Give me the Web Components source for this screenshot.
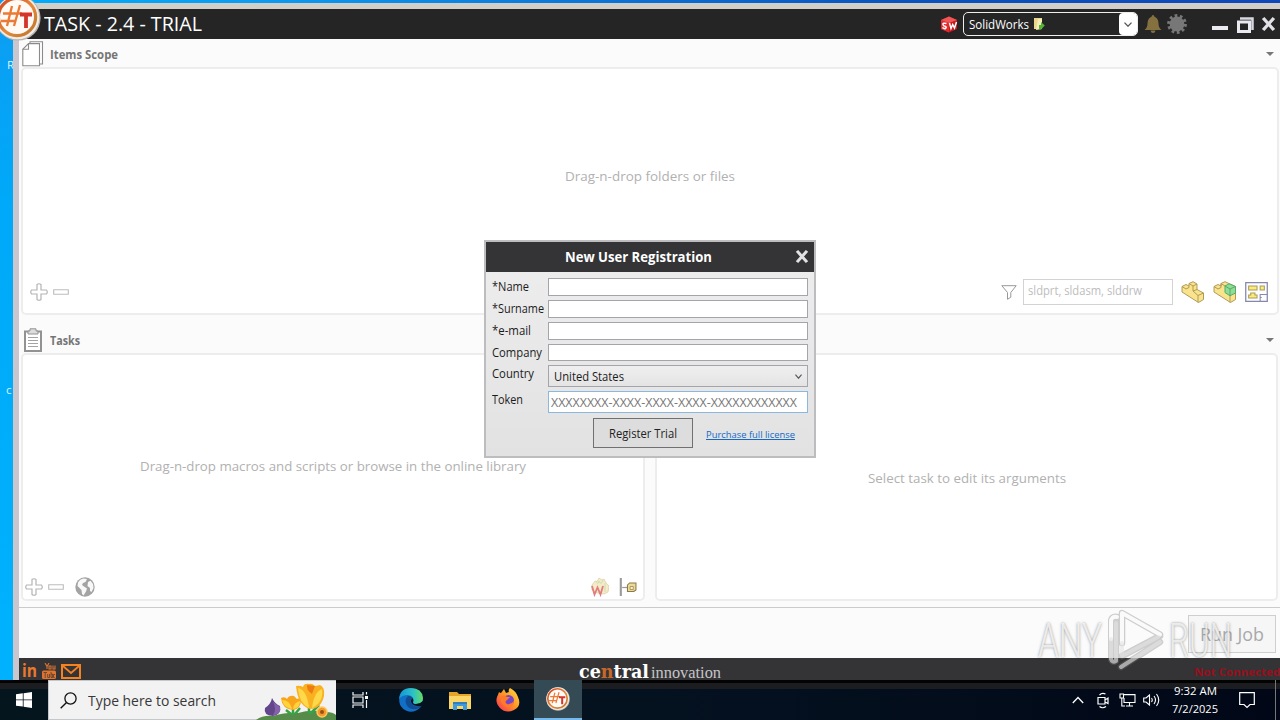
<!DOCTYPE html>
<html lang="en">
<head>
<meta charset="utf-8">
<title>TASK - 2.4 - TRIAL</title>
<style>
html,body{margin:0;width:1280px;height:720px;overflow:hidden;font-family:"Open Sans","Noto Sans",sans-serif;background:#000}
</style>
</head>
<body>
<desktop-screen></desktop-screen>
<script>
const define = (name, html) => {
  const t = document.createElement('template');
  t.innerHTML = html;
  customElements.define(name, class extends HTMLElement {
    constructor() {
      super();
      this.attachShadow({mode: 'open'}).appendChild(t.content.cloneNode(true));
    }
  });
};

/* Single line of text squeezed to a given advance width */
customElements.define('fit-text', class extends HTMLElement {
  constructor() {
    super();
    this.attachShadow({mode: 'open'}).innerHTML = '<style>:host{display:block;flex:none;white-space:nowrap}span{display:inline-block;vertical-align:top;text-decoration:inherit;transform-origin:0 50%}</style><span><slot></slot></span>';
  }
  connectedCallback() {
    const w = +this.getAttribute('w'), s = this.shadowRoot.querySelector('span');
    this.style.width = w + 'px';
    const n = s.offsetWidth;
    if (n) s.style.transform = `scaleX(${w / s.getBoundingClientRect().width})`;
  }
});

const icons = {
logo: ['0 0 46 46', `<defs><linearGradient id="g" x1="0" y1="0" x2="1" y2="1"><stop offset="0" stop-color="#d2421f"/><stop offset=".55" stop-color="#e58a3c"/><stop offset="1" stop-color="#b9742c"/></linearGradient></defs><circle cx="23" cy="23" r="22.6" fill="#b9b4ae"/><circle cx="22.5" cy="22.5" r="21.8" fill="#f1ece6"/><circle cx="22" cy="22" r="18.6" fill="#fffaf5" stroke="url(#g)" stroke-width="3.2"/><path d="M17 11L12 31M25 10L19 31M8 18.500H27M6 26H21" stroke="#ea7a35" stroke-width="2.300" fill="none"/><path d="M25 19.500H37M31 19V33" stroke="#d3342b" stroke-width="3.800"/>`],
copy: ['0 0 22 26', `<g fill="#fff" stroke="#8b8b8b" stroke-width="1.1"><path d="M8 .8H20.500V23H8z"/><path d="M6.500 2.600H17.500V24.800H.8V8.300z"/><path d="M6.500 2.600V8.300H.8" fill="none"/></g>`],
clip: ['0 0 18 24', `<path d="M1 3.500H17V23H1z" fill="#fff" stroke="#929292" stroke-width="2"/><path d="M4 6V3H6V.8H12V3H14V6z" fill="#ddd" stroke="#929292"/><path d="M4 9.500H14M4 12.500H14M4 15.500H14M4 18.500H14" stroke="#a3a3a3"/>`],
plus: ['0 0 18 18', `<path d="M7 1.500Q9 0 11 1.500V7H16.500Q18 9 16.500 11H11V16.500Q9 18 7 16.500V11H1.500Q0 9 1.500 7H7z" fill="#fff" stroke="#b4b4b4" stroke-width="1.200"/>`],
minus: ['0 0 16 6', `<path d="M.7 .8H15.300V5.200H.7z" fill="#fff" stroke="#bdbdbd" stroke-width="1.100"/>`],
funnel: ['0 0 16 15', `<path d="M.8 .7H15.200L9.800 7.500V12.200L6.500 14.300V7.500z" fill="#fff" stroke="#989898"/>`],
arrow: ['0 0 8 4', `<path d="M0 0H8L4 4z" fill="#777"/>`],
part: ['0 0 24 22', `<g stroke="#b09a58" stroke-width="1" stroke-linejoin="round"><path d="M1 5.500L5 3.500L8 5V2.500L12 .7L16 3V8.500L22.500 12V18.500L17.500 21.500L1 11z" fill="#f9e48d"/><path d="M1 5.500L5 8L8 6.500V5M8 2.500L12 5V10L17 14.500V21.500M12 5L16 3M12 10L16 8.500M17 14.500L22.500 12" fill="none"/></g>`],
asm: ['0 0 24 22', `<g stroke="#b09a58" stroke-width="1" stroke-linejoin="round"><path d="M1 5.500L5 3.500L8 5V2.500L12 .7L22.500 5.500V18.500L17.500 21.500L1 11z" fill="#f9e48d"/><path d="M1 5.500L5 8L8 6.500V2.500L12 5M17 15V21.500" fill="none"/><path d="M12 5L16 2.800L22.500 5.500V12L17 14.800L12 11.500z" fill="#8fdc98" stroke="#55ad65"/><path d="M12 5L17 8L22.500 5.500M17 8V14.800" fill="none" stroke="#55ad65"/></g>`],
drw: ['0 0 22 20', `<path d="M.7 .7H21.300V19.300H.7z" fill="#fdfdff" stroke="#8587ad" stroke-width="1.200"/><path d="M14.500 19V12.500H21M14.500 15.500H16" fill="none" stroke="#8587ad"/><g fill="#faeb7a" stroke="#aa9c5c"><path d="M3.500 4H11.500V8H3.500zM14.500 4H18.500V8H14.500zM5.500 11H9.500V13H11.500V16H3.500V13H5.500z"/></g>`],
globe: ['0 0 20 20', `<circle cx="10" cy="10" r="9.700" fill="#a3a3a3"/><path d="M3 5.500Q5 2 8.500 1.500L12 2L10.500 5L8 6L7 8L9 9.500L12 11.500L11 14.500L8.500 18.500L7 17L6.500 13L4 10.500L2.500 9zM13 5L15.500 3.800L18 7L18.500 11L16.500 15L15 14L15 11L12.500 9z" fill="#f8f8f8"/>`],
word: ['0 0 18 20', `<g fill="#f4ecc6" stroke="#d9cd9e" stroke-width=".7"><path d="M1 8L4 4L6 4.500L8 1L11 3L13 2L15 6L18 9L17 15L13 17L6 16L1 13z"/></g><path d="M5 4Q7 9 8 4Q10 9 12 3M14 6V15" stroke="#cfdcb8" fill="none"/><path d="M1 9L3.500 17.500L6.500 10.500L9.500 17.500L12 9" fill="none" stroke="#e07d80" stroke-width="1.800"/>`],
macro: ['0 0 17 18', `<path d="M1.700 0V18" stroke="#9a9a9a" stroke-width="2"/><path d="M3 9.500H8" stroke="#999" stroke-width="1.200"/><path d="M8 7L10 5H16V12L14 13.500H8z" fill="#eddb92" stroke="#8a7951"/><path d="M10.500 8.500H13.500V11.500H10.500z" fill="#faf1c5" stroke="#9c8b5c" stroke-width=".8"/>`],
sw: ['0 0 18 17', `<path d="M1 4L9 .5L17 4V13L9 16.500L1 13z" fill="#c9171b"/><path d="M1 4L9 7V16.500L1 13z" fill="#e32a2c"/><path d="M1 4L9 .5L17 4L9 7z" fill="#ef5856"/><path d="M6.500 7.500Q2.500 6.500 3 8.500Q3.200 10 5 10.200Q7.200 11 5.500 12.500Q4 13 2.500 11.500M9.500 7L11 12.500L12.700 8.500L14.500 12L16.500 6" fill="none" stroke="#fff" stroke-width="1.500"/>`],
open: ['0 0 12 14', `<path d="M1 1H9V12H1z" fill="#eed58e"/><path d="M5 2H9V12L3 13z" fill="#f7edbb"/><path d="M6 12V8H8V5L11.800 8.500L8 12.500z" fill="#52b534"/>`],
bell: ['0 0 18 18', `<path d="M9 0Q10.300 0 10.500 1.800Q14.500 3.500 14.500 8.500Q14.500 12.500 17.500 15H.5Q3.500 12.500 3.500 8.500Q3.500 3.500 7.500 1.800Q7.700 0 9 0z" fill="#85713f"/><path d="M6.500 15.500H11.500Q11 18 9 18Q7 18 6.500 15.500z" fill="#85713f"/>`],
gear: ['0 0 20 20', `<circle cx="10" cy="10" r="8.200" fill="none" stroke="#777" stroke-width="3.400" stroke-dasharray="2.650 2.500"/><circle cx="10" cy="10" r="7.400" fill="#777"/>`],
min: ['0 0 16 4', `<path d="M0 0H16V4H0z" fill="#e9e9ef"/>`],
max: ['0 0 17 16', `<path d="M3 1.500H15.500V13" fill="none" stroke="#d6d7e0" stroke-width="2.500"/><path d="M1.500 5H12.500V14.500H1.500z" fill="#252526" stroke="#e9eaf0" stroke-width="3"/><path d="M5 8H9V11.500H5z" fill="#252526"/>`],
close: ['0 0 14 14', `<path d="M2 1L12 13M12 1L2 13" stroke="#e2e2e6" stroke-width="3.100"/>`],
chev: ['0 0 8 5', `<path d="M.5 .6L4 4.200L7.500 .6" fill="none" stroke="#555" stroke-width="1.300"/>`],
yt: ['0 0 14 17', `<path d="M3 0L5 3.500V6M7 0L5 3.500M7 3H9V6H7zM11 2.500V6H13V2.500" fill="none" stroke="#dd7430" stroke-width="1.100"/><rect y="7.500" width="14" height="8.500" rx="1.500" fill="#dd7430"/><path d="M1.500 9.500H5M3.200 9.500V15M5.700 11V14.500H7.500V11M9 9V14.500H10.500V11H9M12.700 14.500H11.500V11.500H13" stroke="#5b3e2e" fill="none" stroke-width=".8"/>`],
mail: ['0 0 20 15', `<path d="M1 1H19V14H1z" fill="none" stroke="#f58220" stroke-width="2"/><path d="M2 2L10 9L18 2" fill="none" stroke="#f58220" stroke-width="1.700"/>`],
win: ['0 0 16 16', `<path d="M0 2.300L6.800 1.300V7.500H0zM7.600 1.200L16 0V7.500H7.600zM0 8.300H6.800V14.600L0 13.700zM7.600 8.300H16V16L7.600 14.800z" fill="#fff"/>`],
search: ['0 0 17 17', `<circle cx="10.500" cy="6.500" r="5.600" fill="none" stroke="#111" stroke-width="1.300"/><path d="M6.500 10.500L.7 16.300" stroke="#111" stroke-width="1.400"/>`],
flowers: ['0 0 80 39', `<path d="M0 39Q7 34 17 35Q31 31 42 32Q55 28 70 31Q77 31 80 34V39z" fill="#568b49"/><path d="M37 34V26M53 33V22M39 33L44 27M54 33L63 24M35 33L30 29" stroke="#36a345" stroke-width="2.500"/><path d="M16 17Q19 23 24 25Q26 33 17 35Q7 34 9 27Q15 23 16 17z" fill="#62458a"/><path d="M17 21Q21 28 17 34Q25 34 24 26z" fill="#8262a8"/><path d="M25 17Q29 15 31 18Q33 14 38 15L41 18Q45 16 45 19Q45 28 37 29Q26 28 25 17z" fill="#f8a51b"/><path d="M26 19Q34 19 36 28Q28 27 26 19zM44 20Q38 21 37 28Q44 27 44 20z" fill="#ffd33b"/><path d="M40 5Q44 4 47 6Q48 2 53 3Q56 2 59 5L64 4Q69 6 68 15Q65 28 54 28Q42 25 40 5z" fill="#f9b122"/><path d="M42 7Q51 9 53 27Q43 22 42 7zM66 8Q58 11 56 27Q68 21 66 8z" fill="#ffd94a"/><path d="M51 4L59 5L56 13Q50 9 51 4z" fill="#ed7d12"/><circle cx="66" cy="31" r="5" fill="#f49a2b" stroke="#ffc75d" stroke-width="1.500"/><circle cx="66" cy="31" r="2" fill="#965018"/>`],
task: ['0 0 17 16', `<path d="M1 0V3H11V0M1 16V13H11V16M1 5H11V11H1zM14.500 0V2.500M14.500 8V16" fill="none" stroke="#f5f5f5" stroke-width="1.200"/><path d="M13 4H16V7H13z" fill="#fff"/>`],
edge: ['0 0 24 24', `<defs><linearGradient id="e" x1="0" x2="1"><stop stop-color="#1692d8"/><stop offset=".6" stop-color="#2cc3c4"/><stop offset="1" stop-color="#67db63"/></linearGradient></defs><circle cx="12" cy="12" r="11.800" fill="#1170c5"/><path d="M0 11Q1 0 12 0Q23 0 24 10Q24 16 17 16Q13 16 14.500 13Q15 8 9 7Q3 7 0 11z" fill="url(#e)"/><path d="M9 8Q4 13 9 19Q14 23 20 20Q23 19 22 18Q15 20 12 15Q11 12 13.500 10Q11.500 7.500 9 8z" fill="#114b91"/><path d="M13.500 10Q15 12 14 14.500Q14 16 17 16Q21 16 24 13V17Q22 19 18 18Q11 17 12 12z" fill="#04141f"/>`],
explorer: ['0 0 22 19', `<path d="M0 1H8L10 3H22V18H0z" fill="#e6a52a"/><path d="M0 5H22V18H0z" fill="#fbd667"/><path d="M4 19V11H18V19H14V15H8V19z" fill="#3d9ade"/><path d="M4 11H18V13H4z" fill="#2e7fc2"/>`],
firefox: ['0 0 24 24', `<defs><linearGradient id="f" x1="1" y1="0" x2="0" y2="1"><stop stop-color="#ffe346"/><stop offset=".45" stop-color="#ff9a24"/><stop offset="1" stop-color="#f92a57"/></linearGradient></defs><path d="M3 4Q4 5 5 5L8 1L10 5L13 4Q12 2 14 0Q20 3 22 9Q26 18 18 22Q10 26 4 20Q-1 15 1 9Q2 7 3 4z" fill="url(#f)"/><circle cx="12.500" cy="12.500" r="5.500" fill="#7547c7"/><path d="M5 9Q8 6 11 9L14 9L11 12Q8 14 11 16Q15 17 18 13Q17 21 10 19Q4 16 5 9z" fill="#ff7a2a"/>`],
up: ['0 0 12 8', `<path d="M.8 7L6 1.500L11.200 7" fill="none" stroke="#fff" stroke-width="1.300"/>`],
meet: ['0 0 12 17', `<path d="M2.500 3Q5 .5 8.500 2M2.500 14.500Q5.500 17 9 14.500M1 5.500H8V12H1zM8 8L11 6V11.500L8 10" fill="none" stroke="#fff" stroke-width="1.200"/>`],
net: ['0 0 17 14', `<path d="M5 1.600H16V9.500H5V5M10.500 9.500V13M7 13H14M1 1H4.500V5H1zM2.800 5V13H6" fill="none" stroke="#fff" stroke-width="1.100"/>`],
vol: ['0 0 17 14', `<path d="M.7 5H3L6.500 2V12L3 9H.7zM8.500 5Q10 7 8.500 9M11 3Q14 7 11 11M13.500 1Q18 7 13.500 13" fill="none" stroke="#fff" stroke-width="1.100"/>`],
note: ['0 0 16 17', `<path d="M.7 .7H15.300V12.500H11L8 15.500L5 12.500H.7z" fill="none" stroke="#fff" stroke-width="1.200"/>`],
play: ['0 0 56 64', `<g fill="none" stroke-linejoin="round" stroke-linecap="round"><path d="M14 34V4L52 25.500M9 8Q3 7 3 13V50Q4 54 8 52V12M14 47L52 27M13 58L52 33" stroke="#777" stroke-opacity=".35" stroke-width="6.500"/><path d="M14 34V4L52 25.500M9 8Q3 7 3 13V30" stroke="#fff" stroke-opacity=".9" stroke-width="4"/><path d="M3 30V50Q4 54 8 52V14M14 34V47L50 28M13 58L52 33" stroke="#e4e4e4" stroke-opacity=".62" stroke-width="4"/></g>`]
};
customElements.define('ui-icon', class extends HTMLElement {
  constructor() { super(); this.attachShadow({mode: 'open'}); }
  connectedCallback() {
    const [vb, body] = icons[this.getAttribute('name')];
    const [, , w, h] = vb.split(' ');
    this.shadowRoot.innerHTML = `<style>:host{display:block;flex:none;width:${this.getAttribute('w') || w}px;height:${this.getAttribute('h') || h}px}svg{display:block;width:100%;height:100%}</style><svg viewBox="${vb}" preserveAspectRatio="none">${body}</svg>`;
  }
});

define('title-bar', `<style>
:host{display:flex;align-items:center;height:30px;background:#252526;color:#fff;padding-left:25px;box-sizing:border-box}
.t{font-size:19.5px;line-height:30px}
.sp{flex:1}
.combo{display:flex;align-items:center;box-sizing:border-box;width:175px;height:24px;margin:0 6px 0 5px;border:1px solid #eee;border-radius:5px;padding-left:5px;font-size:12.5px}
.combo ui-icon[name=open]{margin-left:4px}
.dd{margin-left:auto;width:18px;height:22px;background:#fff;border-radius:4px;display:flex;align-items:center;justify-content:center}
ui-icon[name=gear]{margin:0 23px 0 5px}
ui-icon[name=min]{margin:8px 9px 0 2px}
ui-icon[name=max]{margin-top:1px}
ui-icon[name=close]{margin:0 4px 0 7px}
</style><fit-text class="t" w="158">TASK - 2.4 - TRIAL</fit-text><div class="sp"></div><ui-icon name="sw"></ui-icon><div class="combo"><fit-text w="60">SolidWorks</fit-text><ui-icon name="open"></ui-icon><div class="dd"><ui-icon name="chev"></ui-icon></div></div><ui-icon name="bell"></ui-icon><ui-icon name="gear"></ui-icon><ui-icon name="min"></ui-icon><ui-icon name="max"></ui-icon><ui-icon name="close" w="15"></ui-icon>`);

define('section-head', `<style>
:host{display:flex;align-items:center;box-sizing:border-box;padding:0 6px 0 3px;color:#757575;font-size:12px;font-weight:700}
.i{width:28px;display:flex}
ui-icon[name=arrow]{margin-left:auto}
</style><div class="i"><slot name="icon"></slot></div><slot></slot><ui-icon name="arrow"></ui-icon>`);

define('drop-panel', `<style>
:host{display:flex;flex-direction:column;box-sizing:border-box;border:2px solid #ededed;border-radius:5px;background:#fff;color:#b1b1b1;font-size:13.5px}
.hint{flex:1;display:flex;align-items:center;justify-content:center;padding-top:var(--shift,0)}
.bar{display:flex;align-items:center}
</style><div class="hint"><slot></slot></div><div class="bar"><slot name="bar"></slot></div>`);

define('tool-row', `<style>:host{display:flex;align-items:center;width:100%}</style><slot></slot>`);

define('app-window', `<style>
:host{display:flex;flex-direction:column;box-sizing:border-box;height:677px;border-top:6px solid #d2cfc9;border-left:6px solid #c9c7cd;background:#fbfbfb}
.h1{height:28px;padding-top:2px}.h2{height:38px;padding-top:12px}
.p1{height:248px;margin:0 1px 0 2px;--shift:11px}
.row{display:flex;gap:10px;margin:0 1px 0 2px}
.row drop-panel{height:248px}
.p2{width:624px;--shift:1px}.p3{width:623px;--shift:1px}
.filter{box-sizing:border-box;width:150px;height:26px;border:1px solid #d3d3d3;padding:0 4px;font-size:12px;line-height:22px;color:#bdbdbd;margin:0 8px 0 6px}
.sp{flex:1}
.t1{box-sizing:border-box;height:42px;padding:0 9px 0 7px}
.t2{box-sizing:border-box;height:24px;padding:0 6px 0 2px}
.run{height:51px;margin-top:6px;border-top:1px solid #cbcbcb;box-sizing:border-box;display:flex;justify-content:flex-end;padding:7px 4px 0 0}
.btn{box-sizing:border-box;width:88px;height:38px;border:1px solid #cfcfcf;background:#f6f6f6;color:#a9a9a9;font-size:18px;line-height:37px;display:flex;justify-content:center}
.foot{height:22px;background:#343437;display:grid;grid-template-columns:1fr 144px 1fr;grid-template-rows:22px;align-items:center}
.soc{display:flex;align-items:center;gap:5px;padding:4px 0 0 3px;height:18px;color:#ea792d}
.in{font:bold 17px/18px "Open Sans";}
.brand{display:flex;align-items:baseline;color:#fff;gap:2px;padding:4px 0 0 1px;height:18px}
.c{font:900 18px/20px "DejaVu Serif",serif}.c b{color:#c6682a}
.n{font:16px/20px "Liberation Serif",serif;color:#c6c6c8}
.nc{color:#96101c;font-size:11px;line-height:14px;font-weight:700;display:flex;justify-content:flex-end;padding-top:5px}
</style><title-bar></title-bar>
<section-head class="h1"><ui-icon slot="icon" name="copy"></ui-icon><fit-text w="68">Items Scope</fit-text></section-head>
<drop-panel class="p1"><fit-text w="170">Drag-n-drop folders or files</fit-text>
<tool-row slot="bar" class="t1"><ui-icon name="plus"></ui-icon><ui-icon name="minus" style="margin-left:5px"></ui-icon><div class="sp"></div><ui-icon name="funnel"></ui-icon><div class="filter"><fit-text w="114">sldprt, sldasm, slddrw</fit-text></div><ui-icon name="part"></ui-icon><ui-icon name="asm" style="margin:0 8px"></ui-icon><ui-icon name="drw" w="23"></ui-icon></tool-row></drop-panel>
<section-head class="h2"><ui-icon slot="icon" name="clip" style="margin-left:2px"></ui-icon><fit-text w="30">Tasks</fit-text></section-head>
<div class="row"><drop-panel class="p2"><fit-text w="386">Drag-n-drop macros and scripts or browse in the online library</fit-text>
<tool-row slot="bar" class="t2"><ui-icon name="plus"></ui-icon><ui-icon name="minus" style="margin-left:5px"></ui-icon><ui-icon name="globe" style="margin-left:11px"></ui-icon><div class="sp"></div><ui-icon name="word" style="margin-right:10px"></ui-icon><ui-icon name="macro" w="18"></ui-icon></tool-row></drop-panel>
<drop-panel class="p3"><fit-text w="198">Select task to edit its arguments</fit-text></drop-panel></div>
<div class="run"><div class="btn"><fit-text w="64">Run Job</fit-text></div></div>
<div class="foot"><div class="soc"><fit-text w="15" class="in">in</fit-text><ui-icon name="yt"></ui-icon><ui-icon name="mail"></ui-icon></div><div class="brand"><fit-text w="70" class="c">ce<b>n</b>tral</fit-text><fit-text w="70" class="n">innovation</fit-text></div><div class="nc"><fit-text w="86">Not Connected</fit-text></div></div>`);

define('form-row', `<style>
:host{display:grid;grid-template-columns:56px 260px;align-items:start;font-size:12px;color:#1b1b1b;line-height:17px}
</style><slot name="label"></slot><slot></slot>`);

define('text-box', `<style>
:host{display:flex;align-items:center;box-sizing:border-box;height:18px;border:1px solid #a4a5aa;background:#fff}
</style><slot></slot>`);

define('register-dialog', `<style>
:host{display:block;box-sizing:border-box;border:2px solid #bdbdbf;background:linear-gradient(#eee,#e2e2e2);font-size:12px}
header{display:grid;grid-template-columns:1fr auto 1fr;align-items:center;height:30px;background:#343437;color:#fff;font-weight:700;font-size:13.5px}
header fit-text{margin-right:24px}
header ui-icon{justify-self:end;margin:0 5px 2px 0}
.f{padding:6px 0 0 6px;display:flex;flex-direction:column;gap:4px}
.combo{height:22px;background:linear-gradient(#efefef,#e4e4e4);padding:0 5px}
.combo ui-icon{margin-left:auto}
.tok{height:22px;border-color:#8db8dd;color:#777;padding-left:2px}
.act{display:flex;align-items:center;margin:5px 0 0 107px}
.btn{box-sizing:border-box;width:100px;height:30px;border:1px solid #707070;background:#ddd;display:flex;align-items:center;justify-content:center;color:#222}
.lnk{color:#1269c7;text-decoration:underline;font-size:9.5px;margin-left:13px;padding-top:2px}
</style><header><span></span><fit-text w="147">New User Registration</fit-text><ui-icon name="close" h="13"></ui-icon></header>
<div class="f">
<form-row><fit-text slot="label" w="37">*Name</fit-text><text-box></text-box></form-row>
<form-row><fit-text slot="label" w="52">*Surname</fit-text><text-box></text-box></form-row>
<form-row><fit-text slot="label" w="39">*e-mail</fit-text><text-box></text-box></form-row>
<form-row><fit-text slot="label" w="50">Company</fit-text><text-box style="height:17px"></text-box></form-row>
<form-row><fit-text slot="label" w="42">Country</fit-text><text-box class="combo"><fit-text w="70">United States</fit-text><ui-icon name="chev" w="7"></ui-icon></text-box></form-row>
<form-row><fit-text slot="label" w="31">Token</fit-text><text-box class="tok"><fit-text w="246">XXXXXXXX-XXXX-XXXX-XXXX-XXXXXXXXXXXX</fit-text></text-box></form-row>
</div>
<div class="act"><div class="btn"><fit-text w="68">Register Trial</fit-text></div><fit-text class="lnk" w="89">Purchase full license</fit-text></div>`);

define('task-bar', `<style>
:host{display:flex;height:40px;background:linear-gradient(#030303 0 3px,#1c1d20 3px 9px,transparent 9px),linear-gradient(90deg,#04151e,#04101f 60%,#010716)}
.c{width:48px;display:flex;align-items:center;justify-content:center;box-sizing:border-box}
.s{box-sizing:border-box;width:288px;background:#f2f2f2;border:1px solid #c4c8ca;border-right:0;display:flex;align-items:center;color:#383838;font-size:15px;padding-left:11px}
.s fit-text{margin-left:11px}
.s ui-icon[name=flowers]{margin-left:auto}
.a{background:#344a54;border-bottom:2px solid #76b9ed}
.sp{flex:1}
.tray{display:flex;align-items:center;color:#fff}
.clk{display:flex;flex-direction:column;align-items:center;font-size:11.5px;line-height:18px;margin:0 21px 0 12px}
.end{border-right:1px solid #777;margin:0 4px 0 20px;height:40px}
</style><div class="c"><ui-icon name="win"></ui-icon></div><div class="s"><ui-icon name="search"></ui-icon><fit-text w="128">Type here to search</fit-text><ui-icon name="flowers"></ui-icon></div>
<div class="c"><ui-icon name="task"></ui-icon></div><div class="c" style="width:54px"><ui-icon name="edge"></ui-icon></div><div class="c" style="width:44px"><ui-icon name="explorer"></ui-icon></div><div class="c" style="width:52px"><ui-icon name="firefox"></ui-icon></div><div class="c a"><ui-icon name="logo" w="24" h="24"></ui-icon></div><div class="sp"></div>
<div class="tray"><ui-icon name="up"></ui-icon><ui-icon name="meet" style="margin:0 10px 0 13px"></ui-icon><ui-icon name="net"></ui-icon><ui-icon name="vol" style="margin-left:7px"></ui-icon><div class="clk"><fit-text w="43">9:32 AM</fit-text><fit-text w="46">7/2/2025</fit-text></div><ui-icon name="note"></ui-icon><div class="end"></div></div>`);

define('any-watermark', `<style>
:host{display:flex;align-items:center;color:rgba(255,255,255,.75);font:300 49px/48px "Roboto","Open Sans",sans-serif}
fit-text{text-shadow:0 0 3px rgba(70,70,70,.6)}
ui-icon{margin:0 5px 0 6px}
</style><fit-text w="64">ANY</fit-text><ui-icon name="play"></ui-icon><fit-text w="63">RUN</fit-text>`);

define('desktop-screen', `<style>
:host{display:grid;grid-template-rows:680px 40px;width:1280px;height:720px;position:relative;overflow:hidden;background:linear-gradient(90deg,#00adfb,#0d9bf0 20%,#0a53bd 70%,#1048b8)}
.d{display:grid;grid-template-columns:13px 1fr}
.l{background:linear-gradient(#0d9df2,#00a9f9 30%,#00b2fd);color:#dff3fe;font-size:11.5px;line-height:16px;overflow:hidden;padding-left:7px;display:flex;flex-direction:column;box-sizing:border-box}
app-window{margin-top:3px}
.logo{position:absolute;left:-5px;top:-5px}
register-dialog{position:absolute;left:484px;top:240px;width:332px;height:218px}
any-watermark{position:absolute;left:1038px;top:609px}
</style><div class="d"><div class="l"><span style="margin-top:57px">R</span><span style="margin:309px 0 0 -1px">c</span></div><app-window></app-window></div><task-bar></task-bar>
<ui-icon class="logo" name="logo"></ui-icon><register-dialog></register-dialog><any-watermark></any-watermark>`);
</script>
</body>
</html>
